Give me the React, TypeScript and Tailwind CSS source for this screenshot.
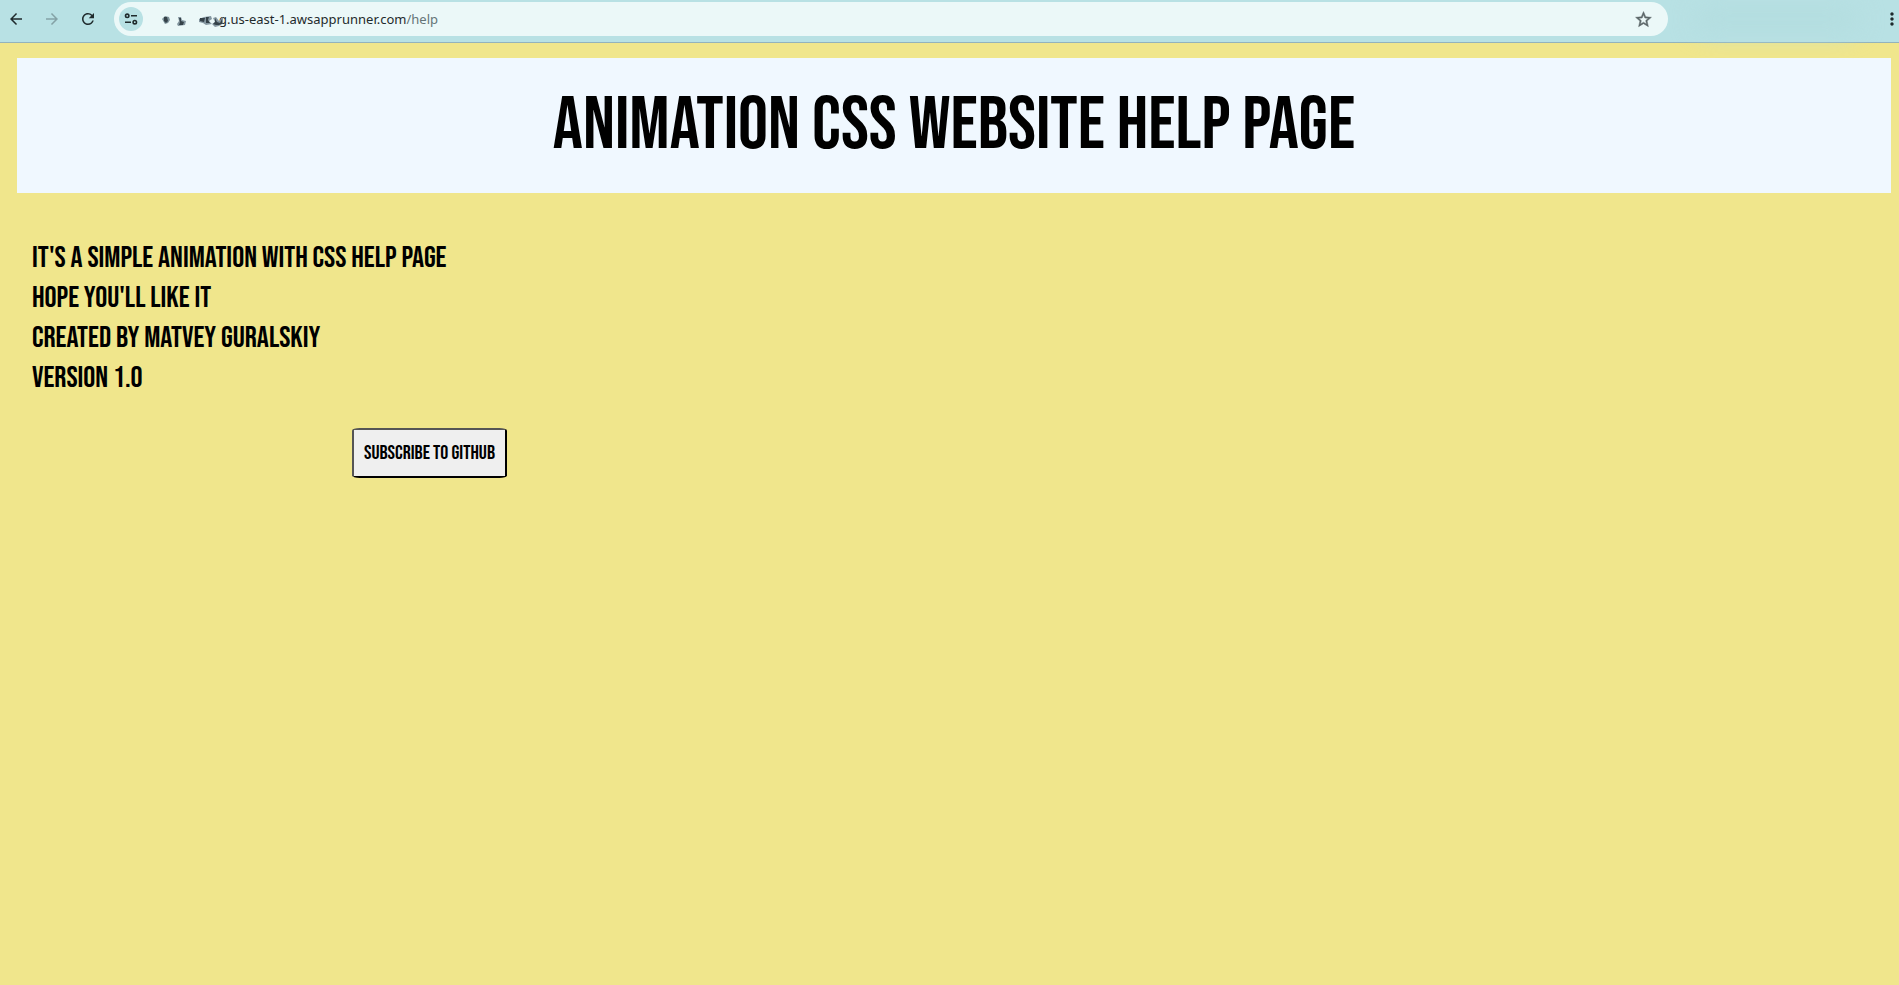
import { MdArrowBack, MdArrowForward, MdMoreVert, MdRefresh, MdStarOutline } from "react-icons/md";

const displayFont = "font-['Bebas_Neue','Liberation_Sans_Narrow','Liberation_Sans',sans-serif]";

const lines = [
  "IT'S A SIMPLE ANIMATION WITH CSS HELP PAGE",
  "HOPE YOU'LL LIKE IT",
  "CREATED BY MATVEY GURALSKIY",
  "VERSION 1.0",
];

function TuneIcon() {
  return (
    <svg width="14" height="14" viewBox="0 0 14 14" fill="none" stroke="#1f2a2c" strokeWidth="1.6" aria-hidden="true">
      <circle cx="3.2" cy="3.8" r="1.7" />
      <path d="M7 3.8H13M1 10.2H7" />
      <circle cx="10.8" cy="10.2" r="1.7" />
    </svg>
  );
}

function Smudges() {
  return (
    <svg width="66" height="20" viewBox="0 0 66 20" className="relative -mr-[6px]" aria-hidden="true">
      <defs>
        <filter id="soft" x="-20%" y="-20%" width="140%" height="140%">
          <feGaussianBlur stdDeviation="0.6" />
        </filter>
      </defs>
      <g filter="url(#soft)">
        <path d="M3 10l3-3 4 1 1 3-2 3-3 1z" fill="#7f939b" />
        <path d="M5 8l3 0 1 4-2 2-2-2z" fill="#34434a" />
        <path d="M19 8l3 0 1 3 4 1-1 4-7 1-1-2 2-3z" fill="#8496a0" />
        <path d="M20 9l2 0 0 3 3 1-1 3-4 0 1-3z" fill="#34434a" />
        <path d="M40 10l5-2 7-1 1 3-3 2 3 3-6 1-3-2-4-1z" fill="#8496a0" />
        <path d="M41 9l5 0-1 4-4-1zM47 8l3 0-1 3 2 3-4 0 0-3z" fill="#34434a" />
        <path d="M54 9l3-1 3 4 4-4 0 6-4 3-4 1-3-3 3-2z" fill="#8496a0" />
        <path d="M56 9l2 4 3 1 2-4 0 5-3 1-3 0-3-1 2-2z" fill="#34434a" />
      </g>
    </svg>
  );
}

function BrowserBar() {
  return (
    <div className="flex h-[43px] items-start border-b border-[#93b3bc] bg-[#b8e1e4] pt-[2px] pl-[7px]">
      <div className="flex h-[34px] items-center gap-[18px] text-[#1f2a2c]">
        <button type="button" aria-label="Back"><MdArrowBack size={18} /></button>
        <button type="button" aria-label="Forward" className="text-[#84a2a6]"><MdArrowForward size={18} /></button>
        <button type="button" aria-label="Reload"><MdRefresh size={18} /></button>
      </div>
      <div className="ml-[17px] flex h-[34px] w-[1554px] min-w-0 shrink items-center rounded-full bg-[#ebf8f8] pr-[15px] pl-[5px]">
        <button type="button" aria-label="Site information" className="flex size-6 items-center justify-center rounded-full bg-[#b8e1e4]">
          <TuneIcon />
        </button>
        <div className="ml-4 flex items-center">
          <Smudges />
          <span className="font-['Noto_Sans',sans-serif] text-[13px] leading-5 text-[#1f2a2c]">
            g.us-east-1.awsapprunner.com<span className="text-[#647477]">/help</span>
          </span>
        </div>
        <button type="button" aria-label="Bookmark" className="ml-auto text-[#5b6668]">
          <MdStarOutline size={19} stroke="currentColor" strokeWidth={0.6} />
        </button>
      </div>
      <div className="flex h-[34px] min-w-0 flex-1 items-center">
        <div className="mr-6 ml-7 h-6 flex-1 rounded-full bg-[#b3dddf] blur-md" />
        <button type="button" aria-label="Menu" className="-mr-[3px] text-[#1f2a2c]"><MdMoreVert size={20} /></button>
      </div>
    </div>
  );
}

export default function App() {
  return (
    <div className={`flex min-h-screen flex-col overflow-x-hidden bg-[#f0e68c] text-black ${displayFont}`}>
      <BrowserBar />
      <main className="pt-[15px] pr-2 pl-[17px]">
        <header className="flex h-[135px] items-center justify-center bg-[#f0f8ff]">
          <h1 className="text-[75px] leading-none">ANIMATION CSS WEBSITE HELP PAGE</h1>
        </header>
        <div className="px-[15px] pt-[45px]">
          {lines.map((line) => (
            <p key={line} className="text-[30px] leading-10">{line}</p>
          ))}
        </div>
        <button type="button" className="mt-[30px] ml-[335px] h-[50px] rounded-[5%] border-2 border-t-[#555] border-r-black border-b-black border-l-[#555] bg-[#efefef] px-[10px] text-[20px]">
          SUBSCRIBE TO GITHUB
        </button>
      </main>
    </div>
  );
}
